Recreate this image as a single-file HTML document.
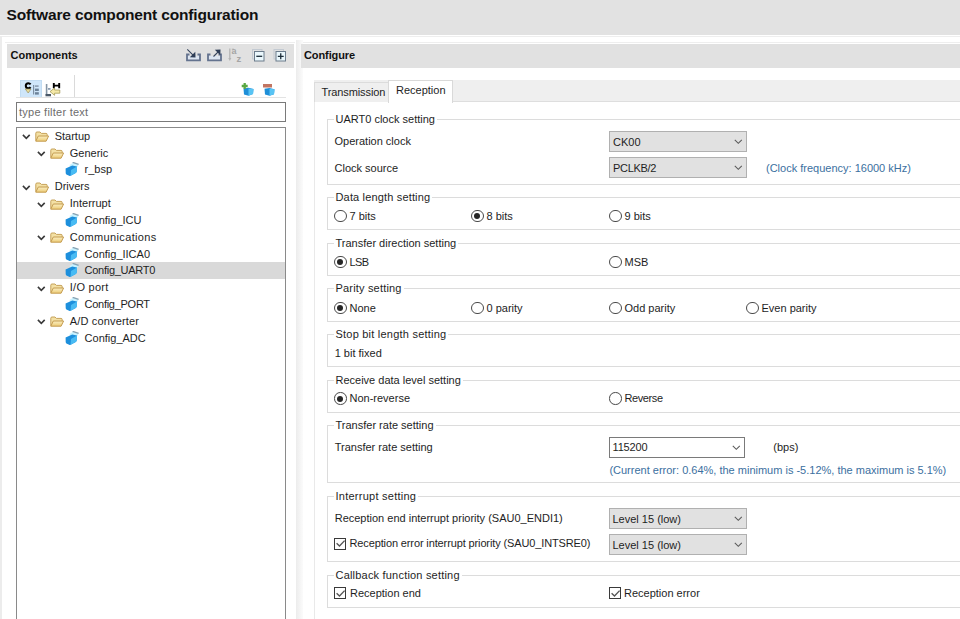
<!DOCTYPE html>
<html><head><meta charset="utf-8">
<style>
*{box-sizing:border-box;margin:0;padding:0}
html,body{width:960px;height:619px;overflow:hidden;background:#fff}
body{position:relative;font-family:"Liberation Sans",sans-serif;font-size:11px;color:#1e1e1e}
.a{position:absolute}
.t{position:absolute;white-space:nowrap;line-height:12px}
#title{left:0;top:0;width:960px;height:35px;background:#e2e2e2}
#titleline{left:0;top:36px;width:960px;height:1px;background:#eeeeee}
.hdr{background:#e1e1e1;top:44px;height:24px}
.gb{position:absolute;left:326.8px;width:700px;border:1px solid #dcdcdc}
.gl{position:absolute;background:#fff;padding:0 2px;white-space:nowrap;line-height:12px}
.radio{position:absolute;width:12.5px;height:12.5px;border:1px solid #4a4a4a;border-radius:50%;background:#fff}
.radio.on::after{content:"";position:absolute;left:2.25px;top:2.25px;width:6px;height:6px;border-radius:50%;background:#262626}
.chk{position:absolute;width:12px;height:12px;border:1px solid #3a3a3a;background:#fff}
.dd{position:absolute;width:138px;height:22px;border:1px solid #b0b0b0;background:#e1e1e1}
.dd.w{background:#fff;border-color:#7a7a7a}
.dd span{position:absolute;left:3px;top:4px;line-height:12px;white-space:nowrap}
.dd svg{position:absolute;right:3.5px;top:7px}
.blue{color:#3b6fa0}
</style></head><body>
<div id="title" class="a"></div>
<div id="titleline" class="a"></div>
<div class="t" style="left:6.5px;top:6.5px;font-size:15.5px;letter-spacing:-0.15px;font-weight:bold;line-height:15px;color:#111">Software component configuration</div>

<!-- left panel -->
<div class="a" style="left:0;top:36px;width:1.5px;height:583px;background:#ececec"></div>
<div class="a" style="left:5px;top:42px;width:290px;height:1px;background:#eeeeee"></div>
<div class="a" style="left:301px;top:42px;width:659px;height:1px;background:#eeeeee"></div>
<div class="a hdr" style="left:7px;width:287px"></div>
<div class="t" style="left:10.5px;top:48.5px;font-weight:bold;color:#111">Components</div>

<!-- right panel -->
<div class="a" style="left:296px;top:40px;width:7px;height:579px;background:linear-gradient(90deg,#ececec,#f2f2f2 40%,#fbfbfb)"></div>
<div class="a hdr" style="left:301px;width:659px"></div>
<div class="t" style="left:304px;top:48.5px;font-weight:bold;color:#111;letter-spacing:-0.1px">Configure</div>

<!-- left toolbar -->
<div class="a" style="left:20px;top:80px;width:21.5px;height:17.5px;background:#cfe6fa;border:1px solid #c2dcf2"></div>
<div class="a" style="left:74px;top:75px;width:1px;height:22px;background:#dadada"></div>
<div class="a" style="left:16px;top:97px;width:270px;height:1px;background:#e3e3e3"></div>
<div class="a" style="left:16px;top:102px;width:270px;height:20px;border:1px solid #7a7a7a"></div>
<div class="t" style="left:19px;top:106px;color:#6d6d6d;letter-spacing:0.25px">type filter text</div>
<div class="a" style="left:16px;top:127px;width:270px;height:500px;border:1px solid #8a8a8a"></div>
<div class="a" style="left:17px;top:262px;width:268px;height:17px;background:#d9d9d9"></div>

<!-- tabs -->
<div class="a" style="left:314px;top:80px;width:646px;height:22px;background:#efefef;border-bottom:1px solid #dedede"></div>
<div class="a" style="left:314px;top:82px;width:75px;height:20px;background:#efefef;border:1px solid #dcdcdc;border-bottom:none"></div>
<div class="a" style="left:388px;top:80px;width:65px;height:23px;background:#fff;border:1px solid #d9d9d9;border-bottom:none"></div>
<div class="t" style="left:321.5px;top:85.5px;letter-spacing:-0.1px">Transmission</div>
<div class="t" style="left:396px;top:84px">Reception</div>
<div class="a" style="left:313.5px;top:102px;width:1px;height:517px;background:#e9e9e9"></div>

<!-- icons -->
<svg class="a" style="left:0;top:0" width="960" height="619" viewBox="0 0 960 619">
<!-- import -->
<rect x="188" y="56" width="11" height="3.5" fill="#dde6f2"/>
<path d="M189.5 54.5 H187 V60.3 H200 V54.5 H197.5" fill="none" stroke="#64738f" stroke-width="1.8"/>
<path d="M187.3 49.3 L192.8 54.8" stroke="#34435c" stroke-width="1.1"/>
<path d="M195.5 57.5 L195.3 51.8 L189.8 57.3 Z" fill="#2f3e57"/>
<!-- export -->
<rect x="209" y="56" width="11" height="3.5" fill="#dde6f2"/>
<path d="M210.5 54.5 H208 V60.3 H221 V54.5 H218.5" fill="none" stroke="#64738f" stroke-width="1.8"/>
<path d="M213.5 56.5 L218.2 51.8" stroke="#34435c" stroke-width="1.1"/>
<path d="M220.5 49.5 L220.3 55.2 L214.8 49.7 Z" fill="#2f3e57"/>
<!-- sort -->
<path d="M229.8 48.5 V59" stroke="#b5b5b5" stroke-width="1.3"/>
<path d="M228.3 58 L229.8 61 L231.3 58 Z" fill="#b5b5b5"/>
<text x="231.5" y="54" font-family="Liberation Sans" font-size="9" font-weight="bold" fill="#a5a5a5">a</text>
<path d="M231.8 49.2 H234" stroke="#a5a5a5" stroke-width="0.8"/>
<text x="236.6" y="61.5" font-family="Liberation Sans" font-size="9.5" font-weight="bold" fill="#a5a5a5">z</text>
<!-- collapse -->
<rect x="252.5" y="49.5" width="9.5" height="9.5" fill="none" stroke="#c3cad2" stroke-width="1"/>
<rect x="254.5" y="51.5" width="9.5" height="9.5" fill="#eaf7fc" stroke="#6c7c8c" stroke-width="1"/>
<path d="M256.3 56.3 H262.2" stroke="#1c2c38" stroke-width="1.3"/>
<!-- expand -->
<rect x="274" y="49.5" width="9.5" height="9.5" fill="none" stroke="#c3cad2" stroke-width="1"/>
<rect x="276" y="51.5" width="9.5" height="9.5" fill="#eaf7fc" stroke="#6c7c8c" stroke-width="1"/>
<path d="M277.8 56.3 H283.7 M280.75 53.3 V59.3" stroke="#1c2c38" stroke-width="1.3"/>
<!-- C icon -->
<path d="M30.6 84.3 Q29.8 83.2 28.4 83.2 Q25.8 83.2 25.8 85.7 Q25.8 88.2 28.4 88.2 Q29.8 88.2 30.6 87.1" fill="none" stroke="#000" stroke-width="2"/>
<path d="M25.3 89 H31 L28.2 93 Z" fill="#e9dc9a" stroke="#9a9060" stroke-width="0.7"/>
<path d="M33.6 85 V94.5" stroke="#7d8fa3" stroke-width="1.2"/>
<rect x="35" y="85.3" width="3.6" height="1.6" fill="#8a9cb0"/>
<rect x="35" y="88.6" width="3.8" height="2.4" fill="#6c8299"/>
<rect x="35" y="92.2" width="3.8" height="2.4" fill="#6c8299"/>
<!-- H icon -->
<path d="M46.6 84 V95" stroke="#8595a5" stroke-width="1.6"/>
<rect x="48" y="88" width="2.5" height="1.8" fill="#8a9cb0"/>
<rect x="45.5" y="94" width="5.5" height="2.3" fill="#4a5868"/>
<path d="M53.8 83 V88.2 M59.2 83 V88.2 M53.8 85.6 H59.2" stroke="#000" stroke-width="1.9"/>
<path d="M50 91.6 L54.6 88 L54.6 90 L59.8 90 L59.8 93.2 L54.6 93.2 L54.6 95.3 Z" fill="#f6eaa8" stroke="#a49a58" stroke-width="0.8" stroke-linejoin="round"/>
<!-- add icon -->
<path d="M243.5 88.5 L248.5 87.8 L253.5 89 L253 94 L248.5 95.8 L244 94.5 Z" fill="#1e8fd8"/>
<path d="M248.5 88.5 L253.5 89 L253 94 L248.5 95.8 Z" fill="#58c4f4"/>
<path d="M244.7 83 V89 M241.7 86 H247.7" stroke="#5aa843" stroke-width="2.3"/>
<!-- remove icon -->
<path d="M264.5 88.8 L269.5 88 L274.5 89.2 L274 94.2 L269.5 95.8 L265 94.5 Z" fill="#1e8fd8"/>
<path d="M269.5 88.8 L274.5 89.2 L274 94.2 L269.5 95.8 Z" fill="#58c4f4"/>
<rect x="263" y="84" width="9" height="3.5" fill="#c27562"/>
</svg>
<!-- tree -->
<svg width="0" height="0" style="position:absolute"><defs>
<linearGradient id="fg" x1="0" y1="0" x2="0" y2="1"><stop offset="0" stop-color="#fbefc4"/><stop offset="1" stop-color="#eccb74"/></linearGradient>
<g id="fold"><path d="M0.8 9.8 V2.2 Q0.8 1 2 1 H5 L6.4 2.4 H11 Q12.2 2.4 12.2 3.6 V5" fill="#f3e0a4" stroke="#c6a25a" stroke-width="1"/>
<path d="M0.8 10.2 L3.3 5 H13.6 L11.1 10.2 Z" fill="url(#fg)" stroke="#c49c50" stroke-width="1" stroke-linejoin="round"/></g>
<g id="chev"><path d="M0.9 0.9 L4.3 4.3 L7.7 0.9" fill="none" stroke="#3a3a3a" stroke-width="1.6"/></g>
<g id="comp"><path d="M4.5 3 L8 0.8 L13.6 2.6 L12.4 5 L6 6 Z" fill="#c8f2ff"/>
<path d="M7.6 0.4 L13.6 2.4" stroke="#88a4b4" stroke-width="1.5" fill="none"/>
<path d="M0.6 6.6 L7.2 3.6 L12 4.6 L11.7 9.6 Q11.5 10.6 10.3 11.3 L5.6 13.7 Q4.6 14.1 3.6 13.6 L1.4 12.4 Q0.7 12 0.7 11 Z" fill="#1d8fdc"/>
<path d="M6 8 L12 4.6 L11.7 9.6 Q11.5 10.6 10.3 11.3 L5.6 13.7 Z" fill="#48bbf3"/>
</g>
</defs></svg>
<svg class="a" style="left:22.2px;top:134.25px" width="9" height="6"><use href="#chev"/></svg>
<svg class="a" style="left:34.7px;top:131.25px" width="15" height="11"><use href="#fold"/></svg>
<div class="t" style="left:54.7px;top:129.75px">Startup</div>
<svg class="a" style="left:37.2px;top:151.08px" width="9" height="6"><use href="#chev"/></svg>
<svg class="a" style="left:50.0px;top:148.08px" width="15" height="11"><use href="#fold"/></svg>
<div class="t" style="left:69.8px;top:146.58px">Generic</div>
<svg class="a" style="left:64.5px;top:162.41px" width="14" height="14"><use href="#comp"/></svg>
<div class="t" style="left:84.6px;top:163.41px">r_bsp</div>
<svg class="a" style="left:22.2px;top:184.74px" width="9" height="6"><use href="#chev"/></svg>
<svg class="a" style="left:34.7px;top:181.74px" width="15" height="11"><use href="#fold"/></svg>
<div class="t" style="left:54.7px;top:180.24px">Drivers</div>
<svg class="a" style="left:37.2px;top:201.57px" width="9" height="6"><use href="#chev"/></svg>
<svg class="a" style="left:50.0px;top:198.57px" width="15" height="11"><use href="#fold"/></svg>
<div class="t" style="left:69.8px;top:197.07px">Interrupt</div>
<svg class="a" style="left:64.5px;top:212.90px" width="14" height="14"><use href="#comp"/></svg>
<div class="t" style="left:84.6px;top:213.90px">Config_ICU</div>
<svg class="a" style="left:37.2px;top:235.23px" width="9" height="6"><use href="#chev"/></svg>
<svg class="a" style="left:50.0px;top:232.23px" width="15" height="11"><use href="#fold"/></svg>
<div class="t" style="left:69.8px;top:230.73px;letter-spacing:0.35px">Communications</div>
<svg class="a" style="left:64.5px;top:246.56px" width="14" height="14"><use href="#comp"/></svg>
<div class="t" style="left:84.6px;top:247.56px">Config_IICA0</div>
<svg class="a" style="left:64.5px;top:263.39px" width="14" height="14"><use href="#comp"/></svg>
<div class="t" style="left:84.6px;top:264.39px;letter-spacing:-0.27px">Config_UART0</div>
<svg class="a" style="left:37.2px;top:285.72px" width="9" height="6"><use href="#chev"/></svg>
<svg class="a" style="left:50.0px;top:282.72px" width="15" height="11"><use href="#fold"/></svg>
<div class="t" style="left:69.8px;top:281.22px;letter-spacing:0.25px">I/O port</div>
<svg class="a" style="left:64.5px;top:297.05px" width="14" height="14"><use href="#comp"/></svg>
<div class="t" style="left:84.6px;top:298.05px;letter-spacing:-0.28px">Config_PORT</div>
<svg class="a" style="left:37.2px;top:319.38px" width="9" height="6"><use href="#chev"/></svg>
<svg class="a" style="left:50.0px;top:316.38px" width="15" height="11"><use href="#fold"/></svg>
<div class="t" style="left:69.8px;top:314.88px;letter-spacing:0.15px">A/D converter</div>
<svg class="a" style="left:64.5px;top:330.71px" width="14" height="14"><use href="#comp"/></svg>
<div class="t" style="left:84.6px;top:331.71px">Config_ADC</div>
<!-- /tree -->
<!-- content -->
<div class="gb" style="top:119px;height:65.5px"></div>
<div class="gl" style="left:333.5px;top:113.2px">UART0 clock setting</div>
<div class="gb" style="top:197px;height:33px"></div>
<div class="gl" style="left:333.5px;top:191.2px;letter-spacing:0.16px">Data length setting</div>
<div class="gb" style="top:243px;height:32.5px"></div>
<div class="gl" style="left:333.5px;top:237.2px">Transfer direction setting</div>
<div class="gb" style="top:288px;height:34px"></div>
<div class="gl" style="left:333.5px;top:282.2px;letter-spacing:0.18px">Parity setting</div>
<div class="gb" style="top:334px;height:33px"></div>
<div class="gl" style="left:333.5px;top:328.2px;letter-spacing:0.22px">Stop bit length setting</div>
<div class="gb" style="top:379.5px;height:33.0px"></div>
<div class="gl" style="left:333.5px;top:373.7px">Receive data level setting</div>
<div class="gb" style="top:425px;height:58px"></div>
<div class="gl" style="left:333.5px;top:419.2px">Transfer rate setting</div>
<div class="gb" style="top:496px;height:66px"></div>
<div class="gl" style="left:333.5px;top:490.2px;letter-spacing:0.25px">Interrupt setting</div>
<div class="gb" style="top:574.5px;height:33.0px"></div>
<div class="gl" style="left:333.5px;top:568.7px;letter-spacing:0.2px">Callback function setting</div>
<div class="t " style="left:334.5px;top:135.3px">Operation clock</div>
<div class="dd" style="left:609px;top:130.5px;height:21.5px;width:138px"><span>CK00</span><svg width="9" height="6" viewBox="0 0 9 6"><path d="M0.8 0.8 L4.3 4.3 L7.8 0.8" fill="none" stroke="#5a5a5a" stroke-width="1.05"/></svg></div>
<div class="t " style="left:334.5px;top:161.7px">Clock source</div>
<div class="dd" style="left:609px;top:157px;height:21px;width:138px"><span style="letter-spacing:-0.3px">PCLKB/2</span><svg width="9" height="6" viewBox="0 0 9 6"><path d="M0.8 0.8 L4.3 4.3 L7.8 0.8" fill="none" stroke="#5a5a5a" stroke-width="1.05"/></svg></div>
<div class="t blue" style="left:766px;top:161.9px">(Clock frequency: 16000 kHz)</div>
<div class="radio" style="left:334px;top:209.90px"></div>
<div class="t " style="left:349.5px;top:209.9px">7 bits</div>
<div class="radio on" style="left:471px;top:209.90px"></div>
<div class="t " style="left:486.5px;top:209.9px">8 bits</div>
<div class="radio" style="left:609px;top:209.90px"></div>
<div class="t " style="left:624.5px;top:209.9px">9 bits</div>
<div class="radio on" style="left:334px;top:255.90px"></div>
<div class="t " style="left:349.5px;top:255.89999999999998px;letter-spacing:-0.6px">LSB</div>
<div class="radio" style="left:609px;top:255.90px"></div>
<div class="t " style="left:624.5px;top:255.89999999999998px">MSB</div>
<div class="radio on" style="left:334px;top:301.60px"></div>
<div class="t " style="left:349.5px;top:301.59999999999997px">None</div>
<div class="radio" style="left:471px;top:301.60px"></div>
<div class="t " style="left:486.5px;top:301.59999999999997px">0 parity</div>
<div class="radio" style="left:609px;top:301.60px"></div>
<div class="t " style="left:624.5px;top:301.59999999999997px">Odd parity</div>
<div class="radio" style="left:746px;top:301.60px"></div>
<div class="t " style="left:761.5px;top:301.59999999999997px">Even parity</div>
<div class="t " style="left:334.7px;top:346.8px">1 bit fixed</div>
<div class="radio on" style="left:334px;top:392.40px"></div>
<div class="t " style="left:349.5px;top:392.4px">Non-reverse</div>
<div class="radio" style="left:609px;top:392.40px"></div>
<div class="t " style="left:624.5px;top:392.4px;letter-spacing:-0.4px">Reverse</div>
<div class="t " style="left:334.7px;top:441.4px">Transfer rate setting</div>
<div class="dd w" style="left:609px;top:437px;height:21px;width:136px"><span style="letter-spacing:-0.15px;left:2.5px;top:3px">115200</span><svg width="9" height="6" viewBox="0 0 9 6"><path d="M0.8 0.8 L4.3 4.3 L7.8 0.8" fill="none" stroke="#5a5a5a" stroke-width="1.05"/></svg></div>
<div class="t " style="left:773.3px;top:441px">(bps)</div>
<div class="t blue" style="left:609.4px;top:463.8px">(Current error: 0.64%, the minimum is -5.12%, the maximum is 5.1%)</div>
<div class="t " style="left:334.7px;top:512.3px">Reception end interrupt priority (SAU0_ENDI1)</div>
<div class="dd" style="left:609px;top:508px;height:21px;width:138px"><span style="left:2.5px">Level 15 (low)</span><svg width="9" height="6" viewBox="0 0 9 6"><path d="M0.8 0.8 L4.3 4.3 L7.8 0.8" fill="none" stroke="#5a5a5a" stroke-width="1.05"/></svg></div>
<div class="chk" style="left:334px;top:537.5px"><svg width="10" height="10" viewBox="0 0 10 10" style="position:absolute;left:0.5px;top:0.5px"><path d="M0.6 4.2 L3.5 7 L8.6 1.6" fill="none" stroke="#555" stroke-width="1.35"/></svg></div>
<div class="t " style="left:349.5px;top:537.4px;letter-spacing:-0.125px">Reception error interrupt priority (SAU0_INTSRE0)</div>
<div class="dd" style="left:609px;top:534px;height:21px;width:138px"><span style="left:2.5px">Level 15 (low)</span><svg width="9" height="6" viewBox="0 0 9 6"><path d="M0.8 0.8 L4.3 4.3 L7.8 0.8" fill="none" stroke="#5a5a5a" stroke-width="1.05"/></svg></div>
<div class="chk" style="left:334px;top:587px"><svg width="10" height="10" viewBox="0 0 10 10" style="position:absolute;left:0.5px;top:0.5px"><path d="M0.6 4.2 L3.5 7 L8.6 1.6" fill="none" stroke="#555" stroke-width="1.35"/></svg></div>
<div class="t " style="left:350px;top:587px">Reception end</div>
<div class="chk" style="left:609px;top:587px"><svg width="10" height="10" viewBox="0 0 10 10" style="position:absolute;left:0.5px;top:0.5px"><path d="M0.6 4.2 L3.5 7 L8.6 1.6" fill="none" stroke="#555" stroke-width="1.35"/></svg></div>
<div class="t " style="left:624px;top:587px">Reception error</div>
</body></html>
